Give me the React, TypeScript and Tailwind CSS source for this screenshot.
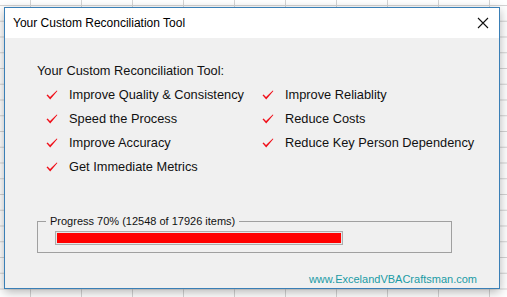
import React from "react";

const leftItems = [
  "Improve Quality & Consistency",
  "Speed the Process",
  "Improve Accuracy",
  "Get Immediate Metrics",
];

const rightItems = [
  "Improve Reliablity",
  "Reduce Costs",
  "Reduce Key Person Dependency",
];

function Tick() {
  return (
    <svg width="12" height="10" viewBox="0 0 12 10" className="shrink-0">
      <path d="M0.5 5.2 L1.6 4.4 L4 7 L10.8 0.4 L11.4 1 L4.2 9.6 Z" fill="#f0101a" />
    </svg>
  );
}

function CheckItem({ label }: { label: string }) {
  return (
    <div className="flex items-center h-[24px]">
      <div className="w-[23px] flex items-center">
        <Tick />
      </div>
      <span>{label}</span>
    </div>
  );
}

export default function App() {
  return (
    <div
      className="w-[507px] h-[297px] overflow-hidden bg-white bg-[linear-gradient(to_right,#d4d4d4_1px,transparent_1px),linear-gradient(to_bottom,#d4d4d4_1px,transparent_1px)] bg-[size:51px_15.75px] bg-[position:30px_5px] pt-[7px] pl-[4px]"
      style={{ fontFamily: '"Liberation Sans", Arial, sans-serif' }}
    >
      <div className="w-[496px] h-[282px] border border-[#3a7fb6] flex flex-col shadow-[0_3px_10px_rgba(0,0,0,0.3)]">
        {/* Title bar */}
        <div className="h-[30px] bg-white flex items-center justify-between pl-[8px] pr-[10px] shrink-0">
          <span className="text-[12px] text-black">Your Custom Reconciliation Tool</span>
          <svg width="12" height="12" viewBox="0 0 12 12">
            <path d="M1 1 L11 11 M11 1 L1 11" stroke="#111" strokeWidth="1.1" />
          </svg>
        </div>

        {/* Body */}
        <div className="flex-1 bg-[#f0f0f0] flex flex-col pl-[32px] text-[12.8px] text-[#111]">
          <div className="mt-[25px] leading-[16px]">Your Custom Reconciliation Tool:</div>

          <div className="flex mt-[4px] pl-[9px]">
            <div className="w-[216px] flex flex-col">
              {leftItems.map((t) => (
                <CheckItem key={t} label={t} />
              ))}
            </div>
            <div className="flex flex-col">
              {rightItems.map((t) => (
                <CheckItem key={t} label={t} />
              ))}
            </div>
          </div>

          {/* Progress group */}
          <fieldset className="mt-[35px] w-[415px] border border-[#a0a0a0] pl-[17px] pb-[7px]">
            <legend className="ml-[-9px] px-[4px] text-[11px] leading-[14px]">
              Progress 70% (12548 of 17926 items)
            </legend>
            <div className="mt-[3px] w-[288px] h-[14px] border border-[#adadad] bg-[#e6e6e6] p-[1px]">
              <div className="h-full bg-[#ff0000]" style={{ width: "100%" }} />
            </div>
          </fieldset>

          <div className="mt-auto mb-[2px] self-end pr-[22px] text-[11px] text-[#1a9ba5] leading-[14px]">
            www.ExcelandVBACraftsman.com
          </div>
        </div>
      </div>
    </div>
  );
}
